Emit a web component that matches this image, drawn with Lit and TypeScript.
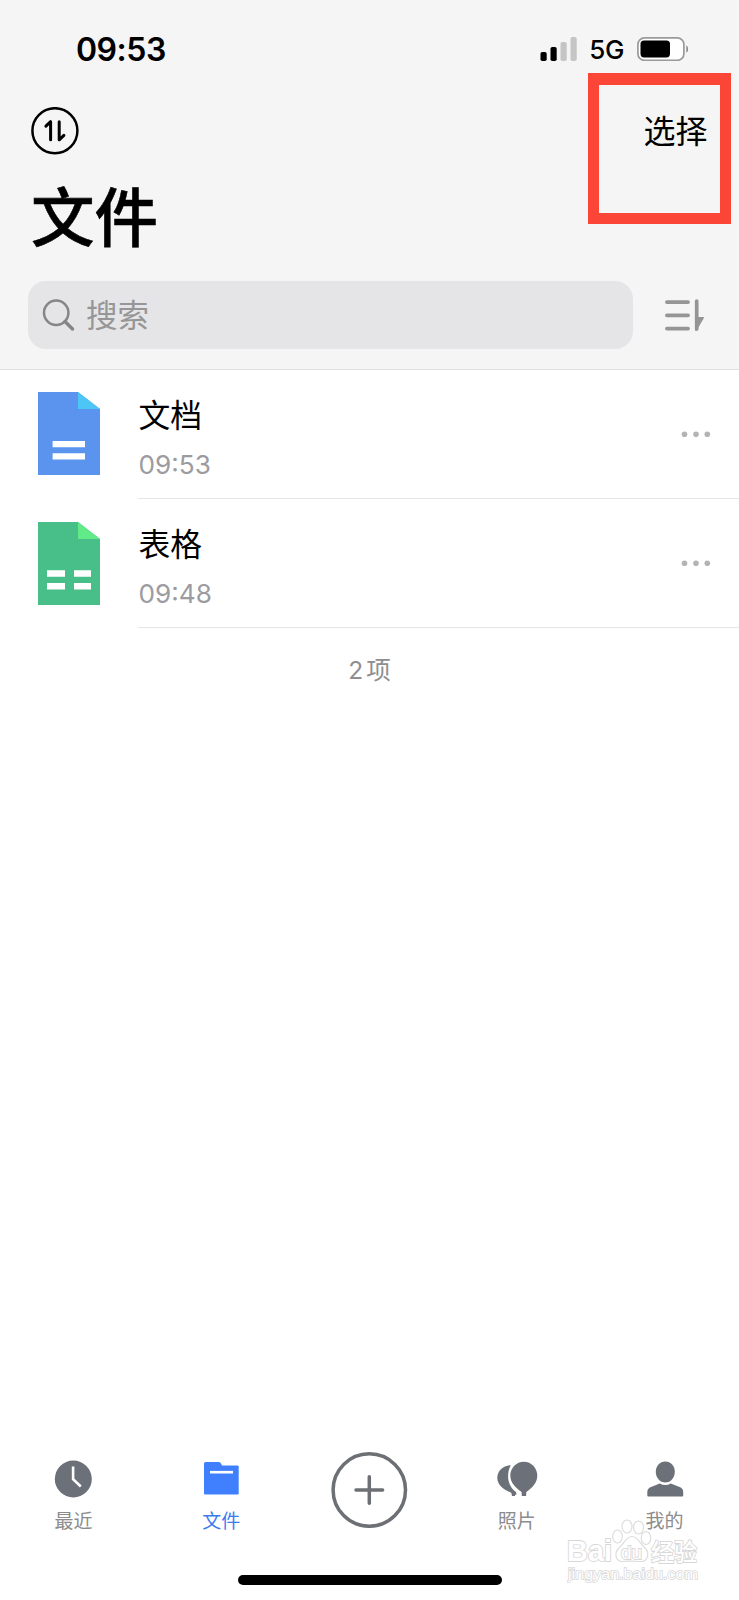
import { LitElement, html, css, svg } from "lit";
import { customElement, property } from "lit/decorators.js";

const FONT = css`"Inter", "Noto Sans CJK SC", sans-serif`;

@customElement("status-bar")
class StatusBar extends LitElement {
  static styles = css`
    :host { display: flex; justify-content: space-between; height: 98px; padding: 0 51px 0 76px; box-sizing: border-box; font-family: ${FONT}; color: #000; }
    .time { font-size: 32px; font-weight: 600; line-height: 40px; margin-top: 30px; letter-spacing: -0.5px; }
    .right { display: flex; align-items: flex-start; }
    .net { font-size: 26px; font-weight: 500; line-height: 32px; margin: 34px 13px 0 12px; letter-spacing: -0.4px; }
    svg { display: block; margin-top: 37px; }
  `;
  render() {
    return html`
      <div class="time">09:53</div>
      <div class="right">
        <svg width="37" height="24" viewBox="0 0 37 24">
          <rect x="0.500" y="15" width="6.2" height="9" rx="1.8" />
          <rect x="10.500" y="10" width="6.2" height="14" rx="1.8" />
          <rect x="20.500" y="5" width="6.2" height="19" rx="1.8" fill="#c5c5c5" />
          <rect x="30.500" y="0" width="6.2" height="24" rx="1.8" fill="#c5c5c5" />
        </svg>
        <div class="net">5G</div>
        <svg width="51" height="24" viewBox="0 0 51 24">
          <rect x="0.9" y="0.9" width="46" height="22.4" rx="6.5" fill="#fff" stroke="#9a9a9a" stroke-width="1.7" />
          <rect x="3.5" y="3.4" width="29.5" height="17" rx="3.6" />
          <path d="M49.3 8.5c2.500.8 2.500 6.4 0 7.200z" fill="#8c8c8c" />
        </svg>
      </div>
    `;
  }
}

@customElement("file-row")
class FileRow extends LitElement {
  @property() name = "";
  @property() time = "";
  @property() kind = "doc";
  static styles = css`
    :host { display: flex; height: 129px; font-family: ${FONT}; }
    .icon { flex: none; margin: 22px 38px 0 38px; width: 62px; height: 83px; }
    :host([kind="sheet"]) .icon { margin-top: 23px; }
    .body { flex: 1; display: flex; justify-content: space-between; border-bottom: 1px solid #e6e6e6; box-sizing: border-box; }
    .text { padding-left: 0.5px; }
    .name { font-size: 31.800px; line-height: 40px; color: #000; margin-top: 26px; }
    .time { font-size: 26.200px; line-height: 32px; color: #9c9ca0; margin-top: 13px; }
    .dots { margin: 60px 28px 0 0; }
  `;
  render() {
    const doc = this.kind === "doc";
    return html`
      <svg class="icon" viewBox="0 0 62 83">
        <path d="M0 0H40L62 17V83H0z" fill=${doc ? "#5b94ee" : "#48be88"} />
        <path d="M40 0L62 17H40z" fill=${doc ? "#4ec6f5" : "#61ea88"} />
        ${doc
          ? svg`<path d="M14.600 49h32.400v6.300H14.600zM14.600 61.300h32.400v6.300H14.600z" fill="#fff"/>`
          : svg`<path d="M9 48.300h18v6.500H9zM36 48.300h17v6.500H36zM9 61h18v6.500H9zM36 61h17v6.500H36z" fill="#fff"/>`}
      </svg>
      <div class="body">
        <div class="text">
          <div class="name">${this.name}</div>
          <div class="time">${this.time}</div>
        </div>
        <svg class="dots" width="30" height="8" viewBox="0 0 30 8" fill="#b4b4b4">
          <circle cx="3.500" cy="4.200" r="2.800" /><circle cx="15" cy="4.200" r="2.800" /><circle cx="26.300" cy="4.200" r="2.800" />
        </svg>
      </div>
    `;
  }
}

const ICONS = {
  recent: svg`<circle cx="20.300" cy="20" r="18.500" fill="#6c7078"/><path d="M20.100 7.500V20.300L27.800 27.500" fill="none" stroke="#fff" stroke-width="2.600"/>`,
  files: svg`<path d="M3 4.500q0-1.500 1.500-1.500H18q1.500 0 2 1.500L21 6.500H36.500q1.200 0 1.200 1V34.500q0 1-1 1H4q-1 0-1-1z" fill="#4080ff"/><path d="M9 13.200H32" stroke="#fff" stroke-width="2.600"/>`,
  photos: svg`<g fill="#6c7078"><path d="M13.800 6.300C6 6.300 0.300 12 0.300 19C0.300 26 7 31 14.300 33.800L15 37H18V35.800H19.500L19 33C14.500 30 11.100 24 11.100 17.500C11.100 13 12 9.500 13.800 6.300z"/><path d="M26.800 2.700C34.500 2.700 40.300 9 40.300 16.500C40.300 24 35 29 29.300 33L29.100 37H24.800L24.600 33C19 29 13.300 24 13.300 16.500C13.300 9 19.300 2.700 26.800 2.700z"/></g>`,
  mine: svg`<g fill="#6c7078"><path d="M20.300 2.500c5.500 0 9.500 4.500 9.500 10.200S25.800 23.500 20.300 23.500s-9.500-5-9.500-10.800S14.800 2.500 20.300 2.500z"/><path d="M14.800 24.500Q20.300 27.500 25.800 24.500L35.800 28.500Q38.200 29.800 38.200 32.500V36.500Q38.200 37.500 37.200 37.500H3.300Q2.300 37.500 2.300 36.500V32.500Q2.300 29.800 4.800 28.500z"/></g>`,
};

@customElement("tab-item")
class TabItem extends LitElement {
  @property() icon: keyof typeof ICONS = "recent";
  @property() label = "";
  @property({ type: Boolean, reflect: true }) active = false;
  static styles = css`
    :host { display: flex; flex-direction: column; align-items: center; font-family: ${FONT}; color: #8c8c8e; padding: 9px 1px 0 0; }
    :host([active]) { color: #3b7bf0; }
    svg { display: block; overflow: visible; }
    .label { font-size: 19px; line-height: 26px; margin-top: 10px; font-weight: 400; }
  `;
  render() {
    return html`<svg width="40" height="40" viewBox="0 0 40 40">${ICONS[this.icon]}</svg>
      <div class="label">${this.label}</div>`;
  }
}

@customElement("water-mark")
class WaterMark extends LitElement {
  static styles = css`
    :host { display: block; width: 134px; height: 78px; }
    svg { display: block; }
    text { fill: #fff; stroke: #d2d2d2; stroke-width: 1.800px; paint-order: stroke; }
    .logo { font: 700 29px "Liberation Sans", sans-serif; }
    .du { font: 400 19px "Liberation Sans", sans-serif; }
    .cjk { font: 500 24px "Noto Sans CJK SC", sans-serif; }
    .url { font: 400 15.500px "Liberation Sans", sans-serif; stroke-width: 1.500px; }
  `;
  render() {
    return html`<svg width="134" height="78" viewBox="0 0 134 78">
      <g fill="#fff" stroke="#d6d6d6" stroke-width="1.100">
        <ellipse cx="50.500" cy="25.500" rx="4.800" ry="6.500" />
        <ellipse cx="60" cy="15.500" rx="5" ry="6.500" />
        <ellipse cx="71.500" cy="16.500" rx="5" ry="6.500" />
        <ellipse cx="79" cy="27" rx="4.800" ry="6.500" />
        <path d="M65 25.500C71 25.500 73 33 78 37C83 42 81 50.500 74 50.500C68 50.500 62 49.500 56 50.500C48 50.500 47 42 52 37C57 33 59 25.500 65 25.500z" />
      </g>
      <text class="logo" x="0" y="50" textLength="45" lengthAdjust="spacingAndGlyphs">Bai</text>
      <text class="du" x="54" y="48" textLength="21" lengthAdjust="spacingAndGlyphs">du</text>
      <text class="cjk" x="84" y="50" textLength="46" lengthAdjust="spacingAndGlyphs">经验</text>
      <text class="url" x="1" y="68" textLength="130" lengthAdjust="spacingAndGlyphs">jingyan.baidu.com</text>
    </svg>`;
  }
}

@customElement("app-root")
class AppRoot extends LitElement {
  static styles = css`
    :host { display: flex; flex-direction: column; position: relative; width: 739px; height: 1600px; background: #fff; overflow: hidden; font-family: ${FONT}; }
    header { background: #f5f5f5; height: 370px; box-sizing: border-box; border-bottom: 1px solid #e0e0e0; }
    .bar { display: flex; justify-content: space-between; align-items: center; height: 66px; padding: 0 31.5px 0 31px; }
    .select { font-size: 32px; line-height: 40px; padding-top: 1px; }
    svg { display: block; }
    h1 { margin: 0; padding: 17px 0 0 31px; height: 117px; box-sizing: border-box; font-size: 63.500px; line-height: 74px; font-weight: 500; color: #000; -webkit-text-stroke: 0.600px #000; }
    .search-line { display: flex; align-items: center; }
    .search { display: flex; align-items: center; width: 605px; height: 68px; margin-left: 28px; border-radius: 18px; background: #e5e5e7; padding-left: 14px; box-sizing: border-box; }
    .search span { font-size: 31.500px; line-height: 40px; color: #969698; margin: 2px 0 0 11px; font-weight: 400; }
    .sort { margin-left: 29px; }
    .count { text-align: center; font-size: 24.500px; line-height: 32px; color: #8e8e90; margin-top: 26px; }
    .count span { margin-left: 3px; }
    nav { margin-top: auto; height: 150px; display: grid; grid-template-columns: repeat(5, 1fr); }
    .add { justify-self: center; margin-top: 1px; }
    .home { align-self: center; width: 264px; height: 10px; border-radius: 5px; background: #000; margin: -25px 0 15px; }
    .highlight { position: absolute; left: 588px; top: 73px; width: 143px; height: 151px; border: 11px solid #fb4637; border-top-width: 12px; box-sizing: border-box; }
    .mark { position: absolute; left: 567px; top: 1511px; opacity: 0.85; }
  `;
  render() {
    return html`
      <header>
        <status-bar></status-bar>
        <div class="bar">
          <svg width="48" height="48" viewBox="0 0 48 48" fill="none" stroke="#000" stroke-linecap="round" stroke-linejoin="round">
            <circle cx="23.900" cy="23.700" r="22.500" stroke-width="2.500" />
            <path d="M14.900 19.200L19.600 14.700V32.800M28.200 14.700V32.800L32.900 28.300" stroke-width="3" />
          </svg>
          <div class="select">选择</div>
        </div>
        <h1>文件</h1>
        <div class="search-line">
          <div class="search">
            <svg width="33" height="34" viewBox="0 0 33 34" fill="none" stroke="#858587" stroke-linecap="round">
              <circle cx="14.200" cy="14.700" r="12.200" stroke-width="2.500" /><path d="M23 23.500L30.500 31" stroke-width="3.500" />
            </svg>
            <span>搜索</span>
          </div>
          <svg class="sort" width="42" height="36" viewBox="0 0 42 36" stroke="#959595" stroke-linecap="round">
            <path d="M4.900 5.100H26.100M4.900 18.300H26.100M4.900 31.600H26.100" stroke-width="3.700" /><path d="M34.700 4V32" stroke-width="3.700" />
            <path d="M34.200 20.600H41.300L34 33.200z" fill="#959595" stroke-width="1.400" stroke-linejoin="round" />
          </svg>
        </div>
      </header>
      <file-row name="文档" time="09:53" kind="doc"></file-row>
      <file-row name="表格" time="09:48" kind="sheet"></file-row>
      <div class="count">2<span>项</span></div>
      <nav>
        <tab-item icon="recent" label="最近"></tab-item>
        <tab-item icon="files" label="文件" active></tab-item>
        <svg class="add" width="78" height="78" viewBox="0 0 78 78" fill="none" stroke="#6c6f73" stroke-width="3.500">
          <circle cx="39.300" cy="39" r="36.200" /><path d="M26 39H52.600M39.300 25.700V52.300" stroke-linecap="round" />
        </svg>
        <tab-item icon="photos" label="照片"></tab-item>
        <tab-item icon="mine" label="我的"></tab-item>
      </nav>
      <div class="home"></div>
      <water-mark class="mark"></water-mark>
      <div class="highlight"></div>
    `;
  }
}
